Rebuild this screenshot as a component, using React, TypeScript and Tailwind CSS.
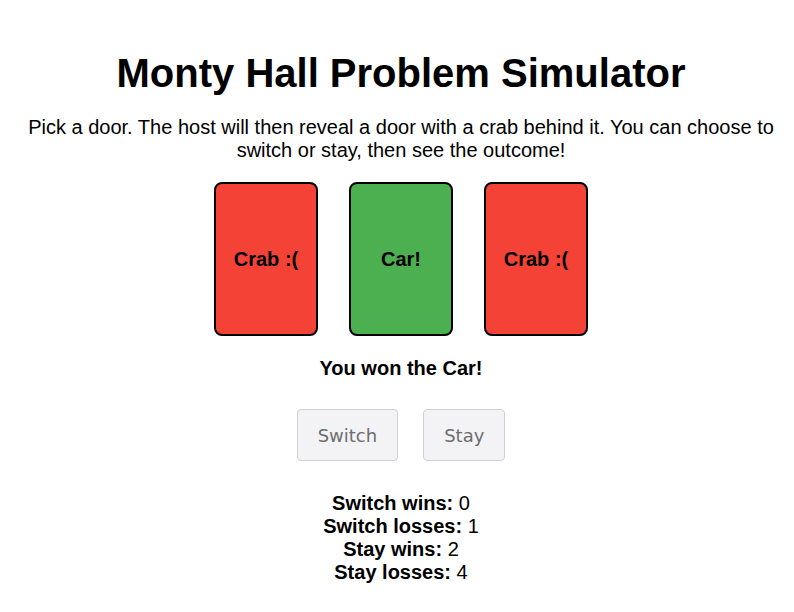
import React from "react";

const Door = ({ label, color }: { label: string; color: string }) => (
  <div
    className={`w-[104px] h-[154px] border-2 border-black rounded-[8px] flex items-center justify-center font-bold ${color}`}
  >
    {label}
  </div>
);

export default function App() {
  return (
    <div
      className="min-h-[612px] bg-white text-black pl-2 text-[20px] leading-[23px] text-center"
      style={{ fontFamily: '"Liberation Sans", Arial, sans-serif' }}
    >
      <h1 className="pt-[50px] text-[40px] leading-[46px] font-bold">Monty Hall Problem Simulator</h1>
      <p className="mt-5 px-4">
        Pick a door. The host will then reveal a door with a crab behind it. You can choose to switch or stay, then see the outcome!
      </p>
      <div className="mt-5 flex justify-center gap-[31px]">
        <Door label="Crab :(" color="bg-[#f44336]" />
        <Door label="Car!" color="bg-[#4caf50]" />
        <Door label="Crab :(" color="bg-[#f44336]" />
      </div>
      <p className="mt-[21px] font-bold">You won the Car!</p>
      <div className="mt-[29px] flex justify-center gap-[25px]">
        {["Switch", "Stay"].map((t) => (
          <button
            key={t}
            disabled
            className="h-[52px] px-5 border border-[#d2d2d6] rounded-[4px] bg-[#f3f3f5] text-[#6d6d6d] text-[18px]"
            style={{ fontFamily: '"DejaVu Sans", Verdana, sans-serif' }}
          >
            {t}
          </button>
        ))}
      </div>
      <div className="mt-[31px]">
        <div><b>Switch wins:</b> 0</div>
        <div><b>Switch losses:</b> 1</div>
        <div><b>Stay wins:</b> 2</div>
        <div><b>Stay losses:</b> 4</div>
      </div>
    </div>
  );
}
